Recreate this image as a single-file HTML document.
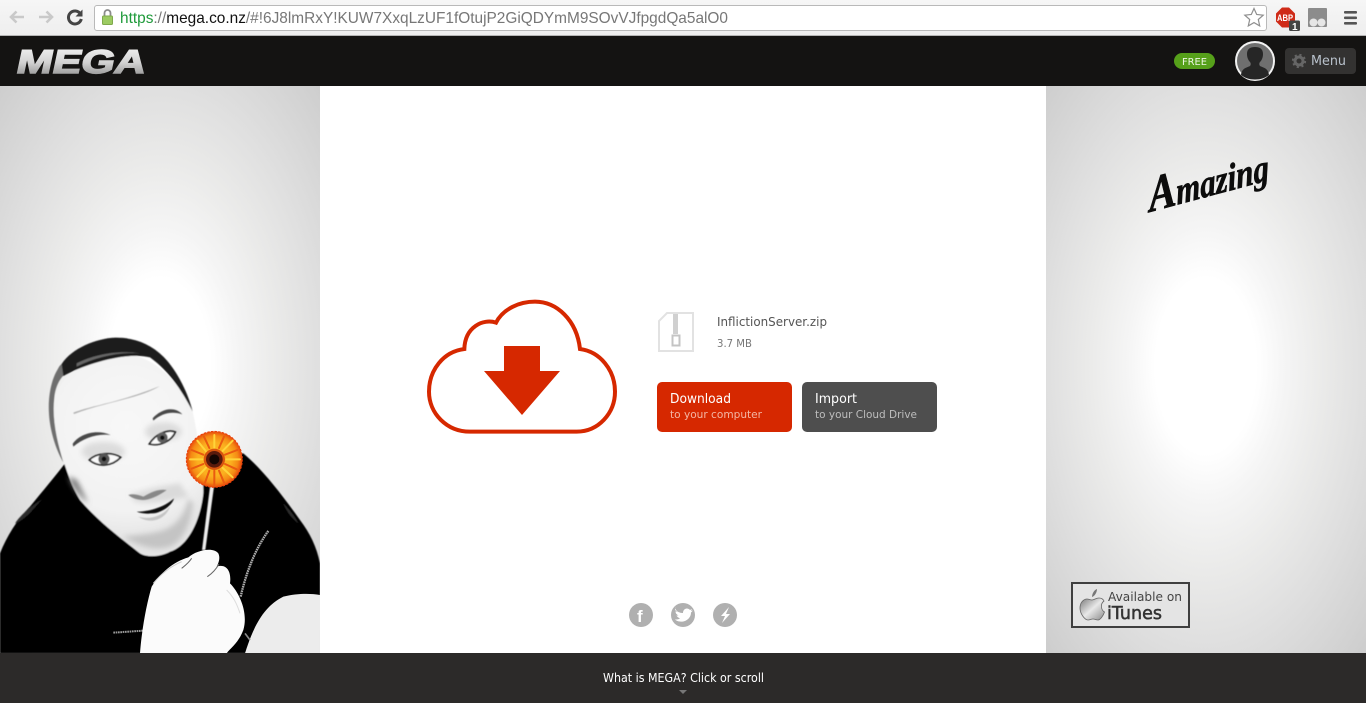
<!DOCTYPE html>
<html><head><meta charset="utf-8"><title>MEGA</title>
<style>
html,body{margin:0;padding:0;width:1366px;height:703px;overflow:hidden;background:#fff}
svg{display:block}
text{font-family:"Liberation Sans",sans-serif;white-space:pre}
text.o{font-family:"DejaVu Sans","Liberation Sans",sans-serif}
</style></head><body>
<svg width="1366" height="703" viewBox="0 0 1366 703" xmlns="http://www.w3.org/2000/svg">
<defs>
<linearGradient id="chrome" x1="0" y1="0" x2="0" y2="1"><stop offset="0" stop-color="#f6f6f6"/><stop offset="1" stop-color="#eeeeee"/></linearGradient>
<linearGradient id="logo" x1="0" y1="0" x2="0" y2="1"><stop offset="0" stop-color="#f6f6f6"/><stop offset=".5" stop-color="#d2d2d2"/><stop offset="1" stop-color="#808080"/></linearGradient>
<radialGradient id="glow" gradientUnits="userSpaceOnUse" cx="0" cy="0" r="1" gradientTransform="translate(160 366) scale(230 400)">
<stop offset="0" stop-color="#fff"/><stop offset=".22" stop-color="#fff"/><stop offset=".34" stop-color="#f5f5f5"/><stop offset=".5" stop-color="#ebebea"/><stop offset=".7" stop-color="#dfdfdf"/><stop offset="1" stop-color="#cdcdcd"/></radialGradient>
<radialGradient id="glow2" gradientUnits="userSpaceOnUse" cx="0" cy="0" r="1" gradientTransform="translate(1206 366) scale(230 400)">
<stop offset="0" stop-color="#fff"/><stop offset=".22" stop-color="#fff"/><stop offset=".34" stop-color="#f5f5f5"/><stop offset=".5" stop-color="#ebebea"/><stop offset=".7" stop-color="#dfdfdf"/><stop offset="1" stop-color="#cdcdcd"/></radialGradient>
<radialGradient id="petal"><stop offset="0" stop-color="#fbb524"/><stop offset=".6" stop-color="#fbb01f"/><stop offset=".84" stop-color="#f58a14"/><stop offset="1" stop-color="#e8480c"/></radialGradient>
<radialGradient id="faceg" gradientUnits="userSpaceOnUse" cx="380" cy="320" r="340"><stop offset="0" stop-color="#f8f8f8"/><stop offset=".75" stop-color="#f2f2f2"/><stop offset="1" stop-color="#e4e4e4"/></radialGradient>
<linearGradient id="apple" x1="0" y1="0" x2="1" y2="1"><stop offset="0" stop-color="#777"/><stop offset=".5" stop-color="#e8e8e8"/><stop offset="1" stop-color="#8a8a8a"/></linearGradient>
<clipPath id="panel"><rect x="0" y="0" width="960" height="999"/></clipPath>
<filter id="b1" x="-10%" y="-10%" width="120%" height="120%"><feGaussianBlur stdDeviation="1.500"/></filter>
<filter id="b2" x="-30%" y="-30%" width="160%" height="160%"><feGaussianBlur stdDeviation="8"/></filter>
</defs>

<!-- browser chrome -->
<rect width="1366" height="36" fill="url(#chrome)"/>
<rect y="35" width="1366" height="1" fill="#b5b5b5"/>
<g fill="none" stroke="#c9c9c9" stroke-width="2.6">
<path d="M24 17H11M16.500 11.500L11 17l5.500 5.500"/>
<path d="M39 17h13M46.500 11.500L52 17l-5.500 5.500"/>
</g>
<path d="M80.500 14a6.500 6.500 0 1 0 .8 5" fill="none" stroke="#444" stroke-width="3"/>
<path d="M82.500 9.500v7h-7z" fill="#444"/>
<rect x="94.500" y="5.500" width="1172" height="25" rx="2.500" fill="#fff" stroke="#b9b9b9"/>
<path d="M104.500 16v-3a3 3 0 0 1 6 0v3" fill="none" stroke="#8c8c8c" stroke-width="1.800"/>
<rect x="102.500" y="16" width="10" height="8.500" rx="1" fill="#9ccb62" stroke="#7fa94c"/>
<text x="120" y="23" font-size="16" textLength="608" lengthAdjust="spacingAndGlyphs" fill="#777"><tspan fill="#1e9a3a">https</tspan>://<tspan fill="#111">mega.co.nz</tspan>/#!6J8lmRxY!KUW7XxqLzUF1fOtujP2GiQDYmM9SOvVJfpgdQa5alO0</text>
<path d="M1254 8.500l2.700 6 6.500.7-4.900 4.300 1.400 6.400-5.700-3.300-5.700 3.300 1.400-6.400-4.900-4.300 6.500-.7z" fill="#fff" stroke="#8f8f8f" stroke-width="1.200"/>
<path d="M1282 7.500h7l6 6v8l-6 6h-7l-6-6v-8z" fill="#cf2b18"/>
<text x="1277" y="21" font-size="9" font-weight="bold" fill="#fff" textLength="16" lengthAdjust="spacingAndGlyphs">ABP</text>
<rect x="1289" y="20.500" width="11" height="10.500" rx="1.500" fill="#444"/>
<text x="1292" y="30" font-size="10" font-weight="bold" fill="#fff">1</text>
<rect x="1308" y="8" width="19" height="19" rx="1" fill="#8c8c8c"/>
<circle cx="1313.500" cy="22.500" r="4" fill="#e6e6e6"/><circle cx="1321.500" cy="22.500" r="4" fill="#e6e6e6"/>
<g fill="#555"><rect x="1344" y="11" width="13" height="2.600" rx="1"/><rect x="1344" y="16.500" width="13" height="2.600" rx="1"/><rect x="1344" y="22" width="13" height="2.600" rx="1"/></g>

<!-- mega header -->
<rect y="36" width="1366" height="50" fill="#141312"/>
<text transform="translate(15 73) skewX(-12)" x="0" y="0" font-size="33" font-weight="bold" fill="url(#logo)" stroke="url(#logo)" stroke-width="1.500" textLength="129" lengthAdjust="spacingAndGlyphs">MEGA</text>
<rect x="1174" y="53" width="41" height="16" rx="8" fill="#56a01a"/>
<text class="o" x="1182" y="65" font-size="10" fill="#eef6e4" textLength="25" lengthAdjust="spacingAndGlyphs">FREE</text>
<circle cx="1255" cy="61" r="19" fill="#6f6f6f" stroke="#f2f2f2" stroke-width="2"/>
<path d="M1241 75c1-7 5-7 9-9 1-1 1-3 0-4-2-2-3-5-3-8 0-5 3-7 8-7s8 2 8 7c0 3-1 6-3 8-1 1-1 3 0 4 4 2 8 2 9 9-4 3-8 4.500-14 4.500s-10-1.500-14-4.500z" fill="#262626"/>
<rect x="1285" y="48" width="71" height="26" rx="4" fill="#333231"/>
<circle cx="1299" cy="61" r="4" fill="none" stroke="#666" stroke-width="3"/>
<circle cx="1299" cy="61" r="6.200" fill="none" stroke="#666" stroke-width="1.800" stroke-dasharray="2.200 2.700"/>
<text class="o" x="1311" y="65" font-size="13" fill="#b9c2cc" textLength="35" lengthAdjust="spacingAndGlyphs">Menu</text>

<!-- side panels -->
<rect x="0" y="86" width="320" height="567" fill="url(#glow)"/>
<rect x="1046" y="86" width="320" height="567" fill="url(#glow2)"/>
<rect x="320" y="86" width="726" height="567" fill="#fff"/>

<!-- portrait -->
<g transform="translate(0 320) scale(.33333)" clip-path="url(#panel)">
<g filter="url(#b1)">
<path d="M0 700C20 650 50 600 90 560 130 510 165 470 195 430L730 400C790 450 850 530 900 600 930 640 950 680 960 730V1000H0Z" fill="#040404"/>
<path d="M45 610c20-30 55-55 80-72-25 30-50 62-80 72zM850 550c20 20 35 40 45 60-20-15-35-35-45-60z" fill="#2c2c2c"/>
<!-- face -->
<path d="M165 230C190 160 260 120 350 100 450 98 530 170 578 275 590 330 612 450 610 520 600 610 560 680 510 695 480 712 440 712 420 700 370 660 300 610 240 540 205 480 190 420 175 370 160 320 160 270 165 230Z" fill="url(#faceg)"/>
<!-- hair -->
<path d="M185 132C215 85 290 55 345 53 400 52 450 70 490 110 530 150 565 220 578 275 550 220 510 155 450 112 380 95 260 130 190 168 172 170 165 150 185 132Z" fill="#1e1e1e"/>
<path d="M185 132c-28 30-42 90-38 150 3 50 20 105 43 145-18-60-35-130-27-195 2-25 12-50 27-65z" fill="#6e6e6e"/>
<path d="M230 130c50-25 120-40 190-30-60-5-130 10-190 40z" fill="#666"/>
</g>
<!-- shading -->
<g filter="url(#b2)">
<ellipse cx="310" cy="395" rx="65" ry="30" fill="#c4c4c4" opacity=".5"/>
<ellipse cx="490" cy="335" rx="55" ry="28" fill="#c4c4c4" opacity=".5"/>
<path d="M390 525c30-10 70-25 150-35l25 40c-50 10-110 25-160 15z" fill="#bcbcbc" opacity=".45"/>
<path d="M370 650c40 25 100 50 150 25 30-20 50-60 60-125l-15-15c-10 50-40 90-90 100-40 10-75 10-105 15z" fill="#aaa" opacity=".55"/>
<path d="M205 470c10 30 35 60 60 80l-35-70z" fill="#777"/>
</g>
<g filter="url(#b1)">
<path d="M218 372C235 345 285 325 332 345 290 340 250 355 220 380Z" fill="#4a4a4a"/>
<path d="M458 295C480 270 520 255 547 283 515 272 485 280 460 302Z" fill="#4a4a4a"/>
<path d="M220 278C280 255 350 250 480 198 420 235 320 245 222 282Z" fill="#b0b0b0"/>
<path d="M268 420C290 398 335 395 362 412 335 440 295 442 268 420Z" fill="#fafafa" stroke="#222" stroke-width="5"/>
<circle cx="312" cy="417" r="17" fill="#555"/><circle cx="312" cy="417" r="7" fill="#0c0c0c"/>
<path d="M448 372C468 340 505 328 526 336 515 362 480 380 448 372Z" fill="#fafafa" stroke="#222" stroke-width="5"/>
<circle cx="487" cy="353" r="16" fill="#5e5e5e"/><circle cx="487" cy="353" r="6.500" fill="#0c0c0c"/>
<path d="M385 525c15-5 30 0 45 5 15-8 40-25 70-20-20 15-50 30-70 30-15 0-35-5-45-15z" fill="#888"/>
<path d="M410 575c40 0 85-15 112-40-8 28-50 48-70 45-15 2-30 0-42-5z" fill="#0c0c0c"/>
<path d="M415 590c30 10 75 0 95-32-8 35-55 60-95 32z" fill="#c4c4c4"/>
<path d="M630 500L606 690h10L642 500z" fill="#ededed"/>
</g>
<!-- flower -->
<circle cx="643" cy="418" r="84" fill="url(#petal)" stroke="#e8400c" stroke-width="3" stroke-dasharray="7 4"/>
<g stroke-linecap="round" stroke-width="6" fill="none">
<path stroke="#ffd43a" d="M643 384V345M679 418H720M608 418H570M667 394L698 362M618 443L592 470M667 443L698 472M618 394L592 362"/>
<path stroke="#ea5a10" d="M657 384L672 350M628 452L615 488M675 432L710 448M610 404L575 390M675 404L712 390M610 432L575 446M628 384L612 350M657 452L672 488M643 452V495"/>
</g>
<circle cx="643" cy="418" r="32" fill="#d8540e"/><circle cx="643" cy="418" r="25" fill="#5a1a0c"/><circle cx="643" cy="418" r="15" fill="#140603"/>
<!-- zipper -->
<path d="M805 633C770 680 740 750 722 830" fill="none" stroke="#aaa" stroke-width="7" stroke-dasharray="5 2"/>
<path d="M340 938l90-6" stroke="#999" stroke-width="6" stroke-dasharray="5 2"/>
<!-- hand -->
<path d="M420 1000C425 930 440 850 455 800 480 760 520 725 565 712 590 690 640 680 655 700 662 715 655 730 650 740 680 730 695 755 690 790 720 820 745 880 730 930 715 970 690 985 680 1000Z" fill="#fbfbfb"/>
<path d="M622 770c12-8 25-20 35-38M545 745c10-8 20-15 30-30" fill="none" stroke="#666" stroke-width="3"/>
<path d="M460 790c20-25 50-50 85-65" fill="none" stroke="#ccc" stroke-width="3"/>
<path d="M680 810c20 20 30 40 40 70" fill="none" stroke="#ddd" stroke-width="3"/>
<path d="M735 1000C760 920 790 860 850 830 890 820 930 820 960 825V1000Z" fill="#ececec"/>
<path d="M735 940l15 20" stroke="#888" stroke-width="5"/>
</g>

<!-- amazing -->
<text transform="translate(1150 212) rotate(-15) skewX(-10)" style="font-family:'Liberation Serif',serif" font-size="38" font-style="italic" font-weight="bold" fill="#0c0c0c" stroke="#0c0c0c" stroke-width=".7" textLength="124" lengthAdjust="spacingAndGlyphs"><tspan font-size="50">A</tspan>mazing</text>

<!-- itunes -->
<rect x="1072" y="583" width="117" height="44" fill="#e4e4e4" stroke="#3f3f3f" stroke-width="2"/>
<path d="M1087 599c2 0 3 1 5 1s4-2 7-2c2 0 4 1 5 3-4 3-3 9 .5 11-1 3-4 8-6.500 8-2 0-3-1-5-1s-3 1-5 1c-3 0-8-6-8-12 0-6 4-9 7-9z" fill="url(#apple)" stroke="#666" stroke-width=".8"/>
<path d="M1092 597c0-3 2-7 5-8 0 3-2 7-5 8z" fill="#777"/>
<text class="o" x="1108" y="601" font-size="12" fill="#444" textLength="74" lengthAdjust="spacingAndGlyphs">Available on</text>
<text class="o" x="1107" y="619" font-size="17.500" fill="#333" stroke="#333" stroke-width=".5" textLength="55" lengthAdjust="spacingAndGlyphs">iTunes</text>

<!-- cloud -->
<g transform="translate(420 290) scale(.33333)">
<path d="M150 425H470C535 425 585 370 585 305 585 240 540 185 480 177 470 90 410 35 345 35 300 35 250 55 228 98 190 85 135 110 133 177 70 185 27 240 27 305 27 370 80 425 150 425Z" fill="#fff" stroke="#d62800" stroke-width="12"/>
<path d="M252 168H360V243H420L306 375 192 243H252Z" fill="#d62800"/>
</g>

<!-- file -->
<path d="M667 313H693V351H659V321Z" fill="#fff" stroke="#e2e2e2" stroke-width="2"/>
<rect x="673" y="314" width="5" height="20" fill="#d0d0d0"/>
<rect x="672.500" y="335.500" width="7" height="10" fill="#fff" stroke="#c4c4c4" stroke-width="2"/>
<text class="o" x="717" y="326" font-size="12.500" fill="#555" textLength="110" lengthAdjust="spacingAndGlyphs">InflictionServer.zip</text>
<text class="o" x="717" y="347" font-size="10.500" fill="#777" textLength="35" lengthAdjust="spacingAndGlyphs">3.7 MB</text>

<!-- buttons -->
<rect x="657" y="382" width="135" height="50" rx="5" fill="#d62800"/>
<text class="o" x="670" y="403" font-size="13" fill="#fff" textLength="61" lengthAdjust="spacingAndGlyphs">Download</text>
<text class="o" x="670" y="418" font-size="11" fill="#f3b6a4" textLength="92" lengthAdjust="spacingAndGlyphs">to your computer</text>
<rect x="802" y="382" width="135" height="50" rx="5" fill="#4e4e4e"/>
<text class="o" x="815" y="403" font-size="13" fill="#fff" textLength="42" lengthAdjust="spacingAndGlyphs">Import</text>
<text class="o" x="815" y="418" font-size="11" fill="#bdbdbd" textLength="102" lengthAdjust="spacingAndGlyphs">to your Cloud Drive</text>

<!-- social -->
<circle cx="641" cy="615" r="12" fill="#b0b0b0"/><circle cx="683" cy="615" r="12" fill="#b0b0b0"/><circle cx="725" cy="615" r="12" fill="#b0b0b0"/>
<text x="637" y="622" font-size="17" font-weight="bold" fill="#fff">f</text>
<path d="M675 610c3 2 5 3 8 3 0-4 4-6 7-3l2-1-1 2 2-.5-2 2c0 6-6 10-11 9-2 0-4-1-5-2 2 0 3 0 5-1-2-1-3-2-3.500-3h2c-2-1-3-2.500-3-4h2c-2-1.500-2.500-3.500-1.500-5z" fill="#fff"/>
<path d="M729 607l-8 9h4l-3 7 8-9h-4z" fill="#fff"/>

<!-- footer -->
<rect y="653" width="1366" height="50" fill="#2c2a29"/>
<text class="o" x="603" y="682" font-size="12" fill="#fff" textLength="161" lengthAdjust="spacingAndGlyphs">What is MEGA? Click or scroll</text>
<path d="M679 690h8l-4 4z" fill="#777"/>
</svg>
</body></html>
